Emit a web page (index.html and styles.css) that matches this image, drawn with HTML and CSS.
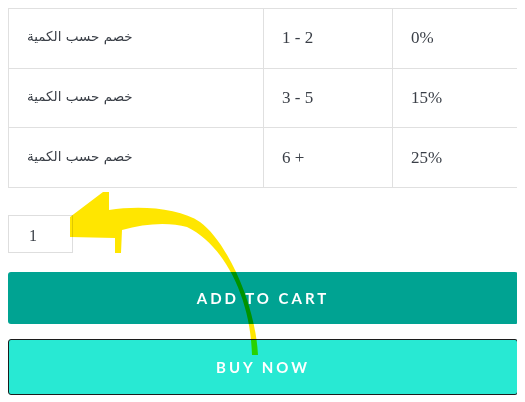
FILE: index.html
```html
<!DOCTYPE html>
<html lang="ar">
<head>
  <meta charset="UTF-8" />
  <meta name="viewport" content="width=device-width, initial-scale=1.0" />
  <title>Quantity discount</title>
  <link rel="stylesheet" href="styles.css">
</head>
<body>
  <table class="discounts" dir="ltr">
    <tr>
      <td class="label">خصم حسب الكمية</td>
      <td class="qty">1 - 2</td>
      <td class="pct">0%</td>
    </tr>
    <tr>
      <td class="label">خصم حسب الكمية</td>
      <td class="qty">3 - 5</td>
      <td class="pct">15%</td>
    </tr>
    <tr>
      <td class="label">خصم حسب الكمية</td>
      <td class="qty">6 +</td>
      <td class="pct">25%</td>
    </tr>
  </table>

  <div class="buy-box">
    <input class="qty-input" type="text" value="1" />
    <button class="btn btn-cart" type="button">Add to cart</button>
    <button class="btn btn-now" type="button">Buy now</button>
  </div>

  <!-- hand drawn hint arrow -->
  <svg class="hint-arrow" width="525" height="402" viewBox="0 0 525 402">
    <path d="M70 217 L103 192 L109 192 L109 210 C140 205 180 208 200 222 C225 240 255 300 258 355 L252 355 C251 300 225 245 187 227 C170 222 145 223 122 230 L121 253 L115 253 L115 238 L70 237 Z" fill="#ffe600" />
  </svg>
</body>
</html>
```

FILE: styles.css
```css
body {
  margin: 8px;
  background: #fff;
  font-family: "Liberation Serif", serif;
  color: #3a3f47;
}
.discounts {
  width: 510px;
  border-collapse: collapse;
}
.discounts tr {
  height: 59.7px;
}
.discounts td {
  border: 1px solid #e0e0e0;
  padding: 0 18px;
  font-size: 17px;
  vertical-align: middle;
}
.discounts .label {
  width: 218px;
  font-family: "DejaVu Sans", sans-serif;
  font-size: 13.5px;
  text-align: left;
  padding-bottom: 4px;
}
.discounts .qty {
  width: 92px;
}
.buy-box {
  display: flex;
  flex-direction: column;
  align-items: flex-start;
  gap: 15px;
  margin-top: 27px;
  width: 510px;
}
.qty-input {
  width: 65px;
  height: 38px;
  box-sizing: border-box;
  border: 1px solid #dedede;
  padding: 3px 0 0 20px;
  font-family: "Liberation Serif", serif;
  font-size: 16px;
  color: #3a3f47;
  margin-bottom: 4px;
}
.btn {
  width: 100%;
  box-sizing: border-box;
  border-radius: 3px;
  font-family: Lato, sans-serif;
  font-weight: 700;
  font-size: 15px;
  letter-spacing: 3px;
  text-transform: uppercase;
  color: #fff;
  cursor: pointer;
}
.btn-cart {
  height: 52px;
  background: #00a392;
  border: none;
}
.btn-now {
  height: 56px;
  background: #28e9d3;
  border: 1px solid #1c1c1c;
}
.hint-arrow {
  position: absolute;
  top: 0;
  left: 0;
  mix-blend-mode: multiply;
  pointer-events: none;
}
```
